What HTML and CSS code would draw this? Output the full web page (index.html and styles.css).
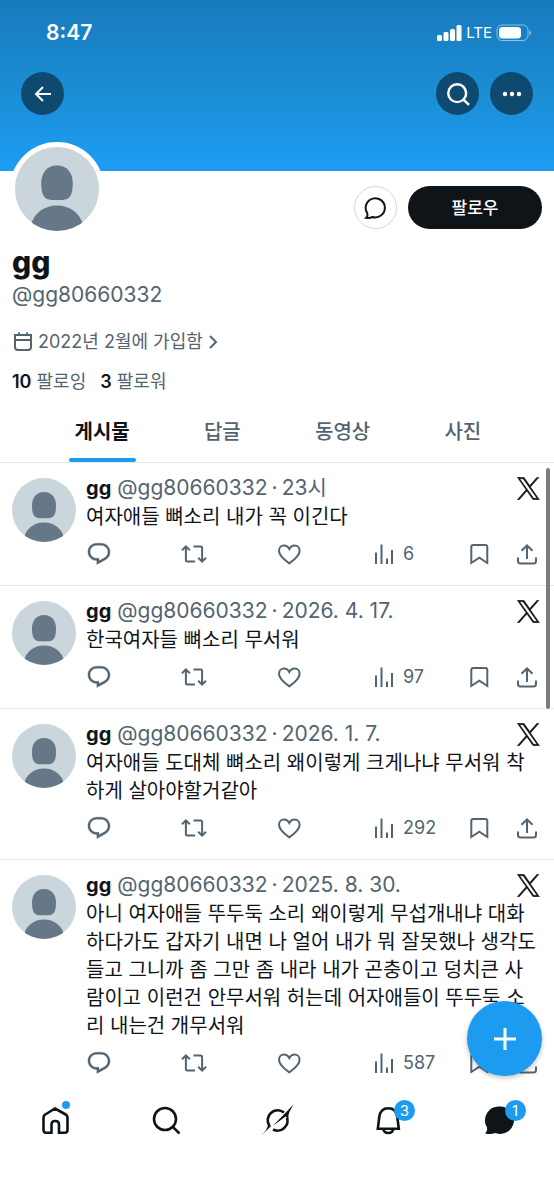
FILE: index.html
```html
<!DOCTYPE html>
<html lang="ko">
<head>
<meta charset="utf-8">
<meta name="viewport" content="width=device-width, initial-scale=1">
<title>gg (@gg80660332)</title>
<link rel="stylesheet" href="styles.css">
</head>
<body>
<svg class="sprite" aria-hidden="true">
  <symbol id="person" viewBox="0 0 64 64">
    <path d="M32 14c7.500 0 12 5.500 12 13.500 0 8-1.500 12.800-8 12.800h-8c-6.500 0-8-4.800-8-12.800C20 19.500 24.500 14 32 14z"/>
    <path d="M12 60C14 50.500 22 44.500 32 44.500S50 50.500 52 60v4H12z"/>
  </symbol>
  <symbol id="xlogo" viewBox="-4 -4 308 308">
    <path d="M178.570 127.150 290.270 0h-26.460l-97.030 110.380L89.340 0H0l117.130 166.930L0 300h26.460l102.400-116.340 81.800 116.340H300M36.010 19.540h40.650l187.130 262.130h-40.660"/>
  </symbol>
  <symbol id="reply" viewBox="0 0 24 24">
    <path fill="currentColor" stroke-width=".3" d="M1.751 10c0-4.420 3.584-8 8.005-8h4.366c4.490 0 8.129 3.640 8.129 8.130 0 2.960-1.607 5.680-4.196 7.110l-8.054 4.460v-3.690h-.067c-4.490.1-8.183-3.510-8.183-8.010zm8.005-6c-3.317 0-6.005 2.690-6.005 6 0 3.370 2.770 6.080 6.138 6.010l.351-.01h1.761v2.300l5.087-2.810c1.951-1.080 3.163-3.130 3.163-5.360 0-3.390-2.744-6.130-6.129-6.130H9.756z"/>
  </symbol>
  <symbol id="repost" viewBox="0 0 26 26">
    <path d="M1 9.200l3.900-3.900 3.900 3.900M4.900 5.800V19q0 1.500 1.500 1.500H14M12.500 5.500h7.100q1.500 0 1.500 1.500v13.200M17.200 16.800l3.900 3.900 3.900-3.900"/>
  </symbol>
  <symbol id="heart" viewBox="0 0 26 26">
    <path d="M13.300 22.300C7 18 3 14 3 9.800 3 6.500 5.300 4.500 7.900 4.500c2.300 0 4.200 1.200 5.400 3.600 1.200-2.400 3.100-3.600 5.400-3.600 2.600 0 4.900 2 4.900 5.300 0 4.200-4 8.200-10.300 12.500z"/>
  </symbol>
  <symbol id="views" viewBox="0 0 26 26"><path d="M5 11.500V23M10.500 3.500V23M16 17.500V23M21 9V23"/></symbol>
  <symbol id="bookmark" viewBox="0 0 26 26"><path d="M5.300 22V6q0-2 2-2h12q2 0 2 2v16l-8-5.300z"/></symbol>
  <symbol id="share" viewBox="0 0 26 26"><path d="M13 18V4.500M7.500 9.800L13 4.500l5.500 5.300M4 16.500v3.500q0 2.500 2.500 2.500h13q2.500 0 2.500-2.500v-3.500"/></symbol>
  <symbol id="search" viewBox="0 0 32 32"><circle cx="15" cy="15" r="11"/><path d="M22.800 22.800l6.700 6.700"/></symbol>
</svg>

<div class="app">
  <header class="banner">
    <div class="status">
      <span class="clock">8:47</span>
      <span class="signal">
        <svg class="solid" width="26" height="18" viewBox="0 0 26 18"><rect x="1" y="11" width="5" height="6" rx="1.500"/><rect x="7.500" y="8" width="5" height="9" rx="1.500"/><rect x="14" y="5" width="5" height="12" rx="1.500"/><rect x="20.500" y="1" width="5" height="16" rx="1.500"/></svg>
        <span>LTE</span>
        <svg class="solid" width="36" height="18" viewBox="0 0 36 18"><rect x="1" y="1" width="31" height="15.500" rx="5" fill="none" stroke="#fff" stroke-opacity=".5"/><rect x="3" y="3" width="22" height="11.500" rx="3.500"/><path d="M33.500 6q3 2.750 0 5.500z" fill-opacity=".6"/></svg>
      </span>
    </div>
    <div class="toolbar">
      <button class="round back" aria-label="뒤로"><svg width="22" height="22" viewBox="0 0 22 22"><path d="M19 11H4M11 4l-7 7 7 7"/></svg></button>
      <button class="round lookup" aria-label="검색"><svg width="26" height="26"><use href="#search"/></svg></button>
      <button class="round" aria-label="더 보기"><svg width="22" height="22" viewBox="0 0 22 22" class="solid"><circle cx="4" cy="11" r="2.200"/><circle cx="11" cy="11" r="2.200"/><circle cx="18" cy="11" r="2.200"/></svg></button>
    </div>
  </header>

  <section class="profile">
    <div class="profile-top">
      <span class="avatar avatar-large"><svg viewBox="0 0 64 64"><use href="#person"/></svg></span>
      <button class="message" aria-label="쪽지"><svg width="24" height="24" viewBox="0 0 24 24"><path d="M2.200 21.800c1.500-1.200 1.500-3 1-4.800A9.600 9.600 0 1 1 8.500 21c-2 1-4 1.200-6.300.8z"/></svg></button>
      <button class="follow">팔로우</button>
    </div>
    <h1>gg</h1>
    <p class="handle">@gg80660332</p>
    <a class="joined" href="#about"><svg width="22" height="22" viewBox="0 0 22 22"><path d="M3 4h16v12q0 3-3 3H6q-3 0-3-3zM3 9h16M7 1.500V4M15 1.500V4"/></svg><span>2022년 2월에 가입함</span><svg width="12" height="16" viewBox="0 0 12 16"><path d="M3 2l6 6-6 6"/></svg></a>
    <p class="counts"><a href="#following"><b>10</b> 팔로잉</a><a href="#followers"><b>3</b> 팔로워</a></p>
  </section>

  <nav class="tabs">
    <a class="active" href="#posts">게시물</a><a href="#replies">답글</a><a href="#videos">동영상</a><a href="#photos">사진</a>
  </nav>

  <main class="feed" id="posts">
    <article class="post">
      <span class="avatar"><svg viewBox="0 0 64 64"><use href="#person"/></svg></span>
      <div class="content">
        <div class="meta"><b>gg</b><span>@gg80660332<i>·</i>23시</span><svg class="x"><use href="#xlogo"/></svg></div>
        <p>여자애들 뼈소리 내가 꼭 이긴다</p>
        <div class="actions">
          <button aria-label="답글"><svg><use href="#reply"/></svg></button><button aria-label="재게시"><svg><use href="#repost"/></svg></button><button aria-label="마음에 들어요"><svg><use href="#heart"/></svg></button><button aria-label="조회수 6"><svg><use href="#views"/></svg>6</button><button aria-label="북마크"><svg><use href="#bookmark"/></svg></button><button aria-label="공유"><svg><use href="#share"/></svg></button>
        </div>
      </div>
    </article>
    <article class="post">
      <span class="avatar"><svg viewBox="0 0 64 64"><use href="#person"/></svg></span>
      <div class="content">
        <div class="meta"><b>gg</b><span>@gg80660332<i>·</i>2026. 4. 17.</span><svg class="x"><use href="#xlogo"/></svg></div>
        <p>한국여자들 뼈소리 무서워</p>
        <div class="actions">
          <button aria-label="답글"><svg><use href="#reply"/></svg></button><button aria-label="재게시"><svg><use href="#repost"/></svg></button><button aria-label="마음에 들어요"><svg><use href="#heart"/></svg></button><button aria-label="조회수 97"><svg><use href="#views"/></svg>97</button><button aria-label="북마크"><svg><use href="#bookmark"/></svg></button><button aria-label="공유"><svg><use href="#share"/></svg></button>
        </div>
      </div>
    </article>
    <article class="post">
      <span class="avatar"><svg viewBox="0 0 64 64"><use href="#person"/></svg></span>
      <div class="content">
        <div class="meta"><b>gg</b><span>@gg80660332<i>·</i>2026. 1. 7.</span><svg class="x"><use href="#xlogo"/></svg></div>
        <p>여자애들 도대체 뼈소리 왜이렇게 크게나냐 무서워 착하게 살아야할거같아</p>
        <div class="actions">
          <button aria-label="답글"><svg><use href="#reply"/></svg></button><button aria-label="재게시"><svg><use href="#repost"/></svg></button><button aria-label="마음에 들어요"><svg><use href="#heart"/></svg></button><button aria-label="조회수 292"><svg><use href="#views"/></svg>292</button><button aria-label="북마크"><svg><use href="#bookmark"/></svg></button><button aria-label="공유"><svg><use href="#share"/></svg></button>
        </div>
      </div>
    </article>
    <article class="post">
      <span class="avatar"><svg viewBox="0 0 64 64"><use href="#person"/></svg></span>
      <div class="content">
        <div class="meta"><b>gg</b><span>@gg80660332<i>·</i>2025. 8. 30.</span><svg class="x"><use href="#xlogo"/></svg></div>
        <p>아니 여자애들 뚜두둑 소리 왜이렇게 무섭개내냐 대화하다가도 갑자기 내면 나 얼어 내가 뭐 잘못했나 생각도들고 그니까 좀 그만 좀 내라 내가 곤충이고 덩치큰 사람이고 이런건 안무서워 허는데 어자애들이 뚜두둑 소리 내는건 개무서워</p>
        <div class="actions">
          <button aria-label="답글"><svg><use href="#reply"/></svg></button><button aria-label="재게시"><svg><use href="#repost"/></svg></button><button aria-label="마음에 들어요"><svg><use href="#heart"/></svg></button><button aria-label="조회수 587"><svg><use href="#views"/></svg>587</button><button aria-label="북마크"><svg><use href="#bookmark"/></svg></button><button aria-label="공유"><svg><use href="#share"/></svg></button>
        </div>
      </div>
    </article>
    <span class="thumb"></span>
  </main>

  <nav class="bottom">
    <button class="compose" aria-label="게시물 작성"><svg width="24" height="24" viewBox="0 0 24 24"><path d="M12 1v22M1 12h22"/></svg></button>
    <a href="#home" aria-label="홈"><svg viewBox="0 0 32 32"><path d="M16 4.500l10.700 6q1.800 1 1.800 3V26q0 2.800-2.800 2.800H20V20.500q0-3.500-3.500-3.500h-.5q-3.500 0-3.500 3.500v8.300H7.300Q4.500 28.800 4.500 26V13.500q0-2 1.800-3z"/></svg><i class="dot"></i></a>
    <a href="#search-page" aria-label="검색"><svg><use href="#search"/></svg></a>
    <a href="#grok" aria-label="Grok"><svg viewBox="0 0 32 32"><path d="M23 8.500A10 10 0 0 0 8.500 22M26 13.500A10 10 0 0 1 12 25.500"/><path class="solid" d="M32.700.3C30.500 4.500 27.200 8 27.300 14.500L24.700 12.500 12 21.800zM.3 31.500C3.500 28 6.500 25 7 20.500L10.200 22z"/></svg></a>
    <a href="#notifications" aria-label="알림"><svg viewBox="0 0 32 32"><path d="M5.800 24.800L7.300 13C8 7.300 11.500 4.300 16.300 4.300s8.300 3 9 8.700l1.500 11.800zM11.200 25c.5 2.600 2.500 4 5.100 4s4.600-1.400 5.100-4"/></svg><i class="badge">3</i></a>
    <a href="#messages" aria-label="쪽지"><svg viewBox="0 0 32 32" class="solid"><path d="M17 2.500a13.700 13.700 0 1 1-4.600 26.500c-3 1.300-7 1.600-10.400.2 2.400-1.800 2.500-3.800 1.800-6.200A13.800 13.800 0 0 1 17 2.500z"/></svg><i class="badge">1</i></a>
  </nav>
</div>
</body>
</html>
```
FILE: styles.css
```css
* { box-sizing: border-box; }
body {
  margin: 0;
  background: #fff;
  color: #0f1419;
  font-family: Inter, "Noto Sans CJK KR", sans-serif;
  font-size: 20px;
  line-height: 28px;
}
button { border: 0; padding: 0; background: none; font: inherit; color: inherit; }
a { color: inherit; text-decoration: none; }
h1, p { margin: 0; }
svg { display: block; flex: none; fill: none; stroke: currentColor; stroke-width: 2; }
.solid { fill: currentColor; stroke: none; }
.sprite { position: absolute; width: 0; height: 0; }
.app { display: flex; flex-direction: column; height: 100vh; }

.banner {
  flex: none;
  height: 171px;
  background: linear-gradient(#187abd, #1b8cd3 50%, #1d9bf0 95%);
  color: #fff;
}
.status { display: flex; justify-content: space-between; padding: 19px 22px 25px 46px; }
.status svg { stroke-width: 1; }
.clock { font-size: 21px; font-weight: 600; }
.signal { display: flex; align-items: center; gap: 4px; font-size: 15px; }
.toolbar { display: flex; gap: 11px; padding: 0 21px; }
.round {
  display: grid;
  place-items: center;
  width: 43px;
  height: 43px;
  border-radius: 50%;
  background: #0e4a70;
}
.back { margin-right: auto; }
.lookup svg { stroke-width: 3; }

.profile { flex: none; padding: 15px 12px 5px; }
.profile-top { display: flex; align-items: center; gap: 11px; height: 43px; }
.avatar {
  flex: none;
  width: 64px;
  height: 64px;
  overflow: hidden;
  border-radius: 50%;
  background: #cad5dc;
}
.avatar svg { width: 100%; height: 100%; fill: #667788; stroke: none; }
.avatar-large {
  align-self: flex-start;
  width: 94px;
  height: 94px;
  margin: -44px auto 0 -2px;
  border: 5px solid #fff;
}
.message {
  display: grid;
  place-items: center;
  width: 43px;
  height: 43px;
  border: 1px solid #cfd9de;
  border-radius: 50%;
}
.follow {
  width: 134px;
  height: 43px;
  border-radius: 22px;
  background: #0f1419;
  color: #fff;
  font-size: 17px;
  font-weight: 500;
}
h1 { margin-top: 15px; font-size: 30px; line-height: 36px; font-weight: 800; }
.handle, .joined, .counts, .meta span { color: #536471; }
.handle { margin-top: 1px; font-size: 21px; }
.joined { display: flex; align-items: center; gap: 4px; margin-top: 19px; font-size: 18px; }
.counts { display: flex; gap: 14px; margin-top: 12px; font-size: 18px; }
b { color: #0f1419; font-weight: 700; }
.counts b { font-weight: 600; }

.tabs {
  flex: none;
  display: flex;
  padding: 0 31px 0 42px;
  border-bottom: 1px solid #e1e8ed;
  color: #536471;
  font-weight: 500;
}
.tabs a { position: relative; flex: 1; padding: 17px 0 16px; text-align: center; }
.tabs .active { color: #0f1419; font-weight: 700; }
.tabs .active::after {
  content: "";
  position: absolute;
  bottom: 0;
  left: 50%;
  width: 67px;
  height: 4px;
  margin-left: -33px;
  border-radius: 2px;
  background: #1d9bf0;
}

.feed { position: relative; flex: 1; min-height: 0; overflow: hidden; }
.post {
  display: flex;
  gap: 10px;
  padding: 12px 14px 18px 12px;
  border-bottom: 1px solid #e6ebee;
}
.post:nth-of-type(4) { border-bottom: 0; }
.post .avatar { margin-top: 3px; }
.content { flex: 1; min-width: 0; }
.meta { display: flex; align-items: center; gap: 6px; height: 28px; padding-bottom: 2px; }
.meta span { font-size: 21px; }
.meta i { margin: 0 4px; font-style: normal; }
.meta .x { width: 23px; height: 23px; margin-left: auto; fill: #0f1419; stroke-width: 7; }
.actions {
  display: grid;
  grid-template-columns: repeat(4, 1fr) 26px 48px;
  margin-top: 10px;
  color: #536471;
  font-size: 18px;
}
.actions button { display: flex; align-items: center; gap: 6px; height: 26px; }
.actions button:last-child { justify-content: flex-end; }
.actions svg { width: 26px; height: 26px; }
.thumb {
  position: absolute;
  top: 5px;
  right: 4px;
  width: 4px;
  height: 241px;
  border-radius: 2px;
  background: #7c7c7c;
}

.bottom {
  position: relative;
  flex: none;
  display: grid;
  grid-template-columns: repeat(5, 1fr);
  justify-items: center;
  padding: 24px 0 63px;
  background: #fff;
}
.bottom a { position: relative; }
.bottom a svg { width: 32px; height: 32px; overflow: visible; }
.bottom a svg:not(.solid) { stroke-width: 2.6; }
.compose {
  position: absolute;
  z-index: 1;
  right: 12px;
  bottom: 123px;
  display: grid;
  place-items: center;
  width: 75px;
  height: 75px;
  border-radius: 50%;
  background: #1d9bf0;
  color: #fff;
  box-shadow: 0 2px 5px rgb(0 0 0 / 25%);
}
.compose svg { stroke-width: 3; }
.dot, .badge { position: absolute; border-radius: 50%; background: #1d9bf0; }
.dot { top: -3px; right: 1px; width: 8px; height: 8px; }
.badge {
  top: -4px;
  right: -11px;
  width: 21px;
  height: 21px;
  color: #fff;
  font-size: 15px;
  font-style: normal;
  line-height: 21px;
  text-align: center;
}
```
